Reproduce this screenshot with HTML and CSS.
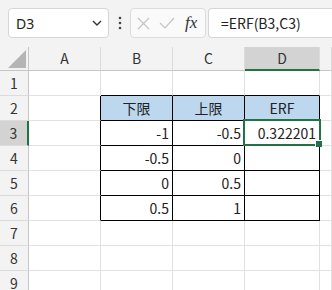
FILE: index.html
```html
<!DOCTYPE html>
<html lang="ja">
<head>
    <meta charset="UTF-8">
    <title>ERF</title>
    <link rel="stylesheet" href="styles.css">
</head>
<body>
    <div class="app">
        <div class="formula-bar">
            <div class="name-box">
                <span>D3</span>
                <svg class="chevron" width="10" height="6" viewBox="0 0 10 6"><path d="M1 1 L5 5 L9 1" fill="none" stroke="#333" stroke-width="1.4"/></svg>
            </div>
            <div class="dots">
                <svg width="4" height="14" viewBox="0 0 4 14"><circle cx="2" cy="2" r="1.3" fill="#444"/><circle cx="2" cy="7" r="1.3" fill="#444"/><circle cx="2" cy="12" r="1.3" fill="#444"/></svg>
            </div>
            <div class="cmd-box">
                <svg width="13" height="13" viewBox="0 0 13 13"><path d="M1 1 L12 12 M12 1 L1 12" stroke="#c4c4c4" stroke-width="1.2"/></svg>
                <svg width="16" height="12" viewBox="0 0 16 12"><path d="M1 6 L6 11 L15 1" fill="none" stroke="#c4c4c4" stroke-width="1.2"/></svg>
                <span class="fx">fx</span>
            </div>
            <div class="formula">=ERF(B3,C3)</div>
        </div>

        <div class="sheet">
            <div class="corner"><div class="tri"></div></div>
            <div class="col-head">A</div>
            <div class="col-head">B</div>
            <div class="col-head">C</div>
            <div class="col-head active">D</div>
            <div class="col-head"></div>

            <div class="row-head">1</div>
            <div class="cell"></div>
            <div class="cell edge-b"></div>
            <div class="cell edge-b"></div>
            <div class="cell edge-b"></div>
            <div class="cell"></div>

            <div class="row-head">2</div>
            <div class="cell edge-r"></div>
            <div class="cell box head">下限</div>
            <div class="cell box head">上限</div>
            <div class="cell box head">ERF</div>
            <div class="cell"></div>

            <div class="row-head active">3</div>
            <div class="cell edge-r"></div>
            <div class="cell box num">-1</div>
            <div class="cell box num">-0.5</div>
            <div class="cell box num selected">0.322201<div class="sel"><div class="handle"></div></div></div>
            <div class="cell"></div>

            <div class="row-head">4</div>
            <div class="cell edge-r"></div>
            <div class="cell box num">-0.5</div>
            <div class="cell box num">0</div>
            <div class="cell box num"></div>
            <div class="cell"></div>

            <div class="row-head">5</div>
            <div class="cell edge-r"></div>
            <div class="cell box num">0</div>
            <div class="cell box num">0.5</div>
            <div class="cell box num"></div>
            <div class="cell"></div>

            <div class="row-head">6</div>
            <div class="cell edge-r"></div>
            <div class="cell box num">0.5</div>
            <div class="cell box num">1</div>
            <div class="cell box num"></div>
            <div class="cell"></div>

            <div class="row-head">7</div>
            <div class="cell"></div>
            <div class="cell"></div>
            <div class="cell"></div>
            <div class="cell"></div>
            <div class="cell"></div>

            <div class="row-head">8</div>
            <div class="cell"></div>
            <div class="cell"></div>
            <div class="cell"></div>
            <div class="cell"></div>
            <div class="cell"></div>

            <div class="row-head">9</div>
            <div class="cell"></div>
            <div class="cell"></div>
            <div class="cell"></div>
            <div class="cell"></div>
            <div class="cell"></div>
        </div>
    </div>
</body>
</html>
```

FILE: styles.css
```css
body {
    margin: 0;
    background-color: #fff;
    overflow: hidden;
    font-family: "Noto Sans CJK JP", "Noto Sans", sans-serif;
}

.app {
    width: 332px;
    height: 290px;
    overflow: hidden;
    background-color: #f3f3f3;
}

.formula-bar {
    height: 47px;
    box-sizing: border-box;
    padding: 8px 0 0 8px;
    display: flex;
    align-items: flex-start;
}

.formula-bar > div {
    flex-shrink: 0;
}

.name-box {
    width: 101px;
    height: 30px;
    box-sizing: border-box;
    border: 1px solid #d6d6d6;
    border-radius: 4px;
    background-color: #fff;
    display: flex;
    align-items: center;
    justify-content: space-between;
    padding: 0 6px 0 7px;
    font-family: "Noto Sans", sans-serif;
    font-size: 14px;
    color: #222;
}

.dots {
    width: 21px;
    height: 30px;
    display: flex;
    align-items: center;
    justify-content: center;
}

.cmd-box {
    width: 76px;
    height: 30px;
    box-sizing: border-box;
    border: 1px solid #dcdcdc;
    border-radius: 4px;
    background-color: #fafafa;
    display: flex;
    align-items: center;
    gap: 9px;
    padding-left: 6px;
}

.fx {
    font-family: "Liberation Serif", serif;
    font-style: italic;
    font-size: 17px;
    color: #333;
    margin-left: 1px;
}

.formula {
    margin-left: 2px;
    width: 200px;
    height: 30px;
    box-sizing: border-box;
    border: 1px solid #d6d6d6;
    border-right: none;
    border-radius: 4px 0 0 4px;
    background-color: #fff;
    padding-left: 12px;
    line-height: 28px;
    font-size: 14px;
    color: #222;
}

.sheet {
    display: grid;
    grid-template-columns: 29px 72px 72px 72px 75px 1fr;
    grid-template-rows: 24px repeat(9, 25px);
    font-size: 14px;
    color: #222;
}

.sheet > div {
    box-sizing: border-box;
}

.corner {
    position: relative;
    border-right: 1px solid #c6c6c6;
    border-bottom: 1px solid #c6c6c6;
}

.tri {
    position: absolute;
    right: 2px;
    bottom: 2px;
    width: 0;
    height: 0;
    border-left: 18px solid transparent;
    border-bottom: 18px solid #b5b5b5;
}

.col-head {
    border-right: 1px solid #dcdcdc;
    border-bottom: 1px solid #c6c6c6;
    text-align: center;
    line-height: 23px;
    color: #333;
}

.row-head {
    border-right: 1px solid #c6c6c6;
    border-bottom: 1px solid #dcdcdc;
    text-align: center;
    line-height: 24px;
    color: #333;
}

.col-head.active {
    background-color: #d3d3d3;
    border-bottom: 2px solid #217346;
    line-height: 22px;
}

.row-head.active {
    background-color: #d3d3d3;
    border-right: 2px solid #217346;
}

.cell {
    background-color: #fff;
    border-right: 1px solid #e1e1e1;
    border-bottom: 1px solid #e1e1e1;
    line-height: 24px;
    padding: 0 3px;
    white-space: nowrap;
}

.edge-r {
    border-right-color: #000;
}

.edge-b {
    border-bottom-color: #000;
}

.box {
    border-right-color: #000;
    border-bottom-color: #000;
}

.head {
    background-color: #bdd7ee;
    text-align: center;
}

.num {
    text-align: right;
}

.selected {
    position: relative;
}

.sel {
    position: absolute;
    left: -2px;
    top: -2px;
    width: 78px;
    height: 27px;
    box-sizing: border-box;
    border: 2px solid #217346;
}

.handle {
    position: absolute;
    right: -3px;
    bottom: -3px;
    width: 6px;
    height: 6px;
    background-color: #217346;
    border-left: 1px solid #fff;
    border-top: 1px solid #fff;
}
```
